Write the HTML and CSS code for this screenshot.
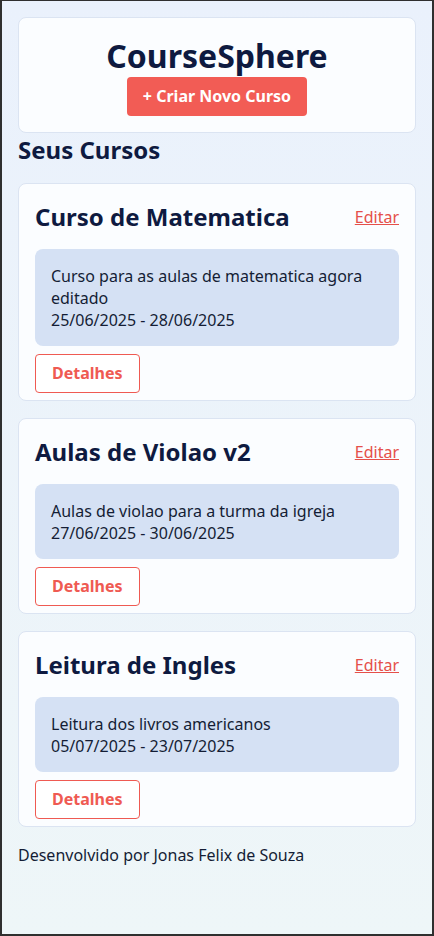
FILE: index.html
```html
<!DOCTYPE html>
<html lang="pt-BR">
<head>
<meta charset="utf-8">
<title>CourseSphere</title>
<link rel="stylesheet" href="styles.css">
</head>
<body>
<div class="page">
  <header class="hero">
    <h1 class="brand">CourseSphere</h1>
    <button class="btn-primary">+ Criar Novo Curso</button>
  </header>
  <h2 class="section-title">Seus Cursos</h2>
  <div class="course-list">
    <article class="card">
      <div class="card-head">
        <h3 class="card-title">Curso de Matematica</h3>
        <a class="edit-link" href="#">Editar</a>
      </div>
      <div class="card-body">
        <p>Curso para as aulas de matematica agora editado</p>
        <p>25/06/2025 - 28/06/2025</p>
      </div>
      <button class="btn-outline">Detalhes</button>
    </article>
    <article class="card">
      <div class="card-head">
        <h3 class="card-title">Aulas de Violao v2</h3>
        <a class="edit-link" href="#">Editar</a>
      </div>
      <div class="card-body">
        <p>Aulas de violao para a turma da igreja</p>
        <p>27/06/2025 - 30/06/2025</p>
      </div>
      <button class="btn-outline">Detalhes</button>
    </article>
    <article class="card">
      <div class="card-head">
        <h3 class="card-title">Leitura de Ingles</h3>
        <a class="edit-link" href="#">Editar</a>
      </div>
      <div class="card-body">
        <p>Leitura dos livros americanos</p>
        <p>05/07/2025 - 23/07/2025</p>
      </div>
      <button class="btn-outline">Detalhes</button>
    </article>
  </div>
  <footer class="footer">Desenvolvido por Jonas Felix de Souza</footer>
</div>
</body>
</html>
```
FILE: styles.css
```css
* { box-sizing: border-box; }
html, body { margin: 0; padding: 0; }
body {
  min-height: 100vh;
  border: 2px solid #2f2f2f;
  border-top-width: 1px;
  background: linear-gradient(180deg, #eaf1fc 0%, #eef6f8 100%);
  font-family: "Noto Sans", sans-serif;
  color: #0f1a3a;
}
.page {
  padding: 16px 16px 40px 16px;
}
.hero {
  background: #fbfdff;
  border: 1px solid #dbe4f2;
  border-radius: 8px;
  padding: 16px;
  display: flex;
  flex-direction: column;
  align-items: center;
}
.brand {
  margin: 0;
  font-size: 32px;
  line-height: 43px;
  font-weight: 700;
  color: #0e1a40;
}
.btn-primary {
  font-family: inherit;
  background: #f25c55;
  color: #ffffff;
  border: none;
  border-radius: 4px;
  font-size: 16px;
  font-weight: 700;
  line-height: 23px;
  padding: 8px 16px;
}
.section-title {
  margin: 2px 0 18px 0;
  font-size: 24px;
  line-height: 30px;
  font-weight: 700;
  color: #0e1a40;
}
.course-list {
  display: flex;
  flex-direction: column;
  gap: 17px;
}
.card {
  background: #fbfdff;
  border: 1px solid #dbe4f2;
  border-radius: 8px;
  padding: 16px 16px 7px 16px;
  display: flex;
  flex-direction: column;
  align-items: flex-start;
}
.card-head {
  width: 100%;
  display: flex;
  justify-content: space-between;
  align-items: center;
  height: 34px;
  margin-bottom: 15px;
}
.card-title {
  margin: 0;
  font-size: 24px;
  font-weight: 700;
  line-height: 34px;
  color: #0e1a40;
}
.edit-link {
  color: #e5504a;
  font-size: 16px;
  line-height: 22px;
  text-decoration: underline;
}
.card-body {
  width: 100%;
  background: #d5e1f4;
  border-radius: 8px;
  padding: 16px 16px 15px 16px;
  margin-bottom: 8px;
}
.card-body p {
  margin: 0;
  font-size: 16px;
  line-height: 22px;
  color: #141d35;
}
.btn-outline {
  font-family: inherit;
  background: #ffffff;
  color: #ef5a52;
  border: 1px solid #ef5a52;
  border-radius: 4px;
  font-size: 16px;
  font-weight: 700;
  line-height: 23px;
  padding: 7px 16px;
}
.footer {
  margin-top: 17px;
  font-size: 16px;
  line-height: 22px;
  color: #141d35;
}
```
